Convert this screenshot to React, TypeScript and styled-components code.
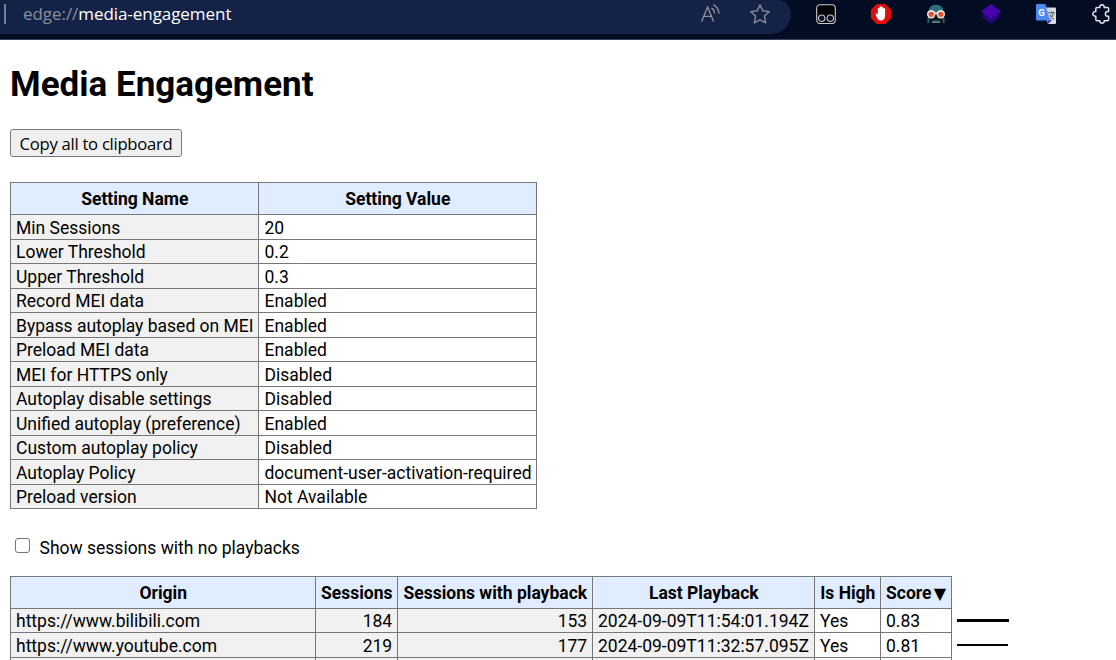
import React from "react";
import styled, { createGlobalStyle } from "styled-components";

const GlobalStyle = createGlobalStyle`
  html, body { margin: 0; padding: 0; background: #fff; }
  body { width: 1116px; height: 660px; overflow: hidden; }
  * { box-sizing: border-box; }
`;

const Window = styled.div`
  height: 660px;
  overflow: hidden;
  font-family: Roboto, "Liberation Sans", sans-serif;
  font-size: 17.5px;
  color: #000;
`;

const Toolbar = styled.header`
  display: flex;
  align-items: flex-start;
  height: 40px;
  background: #020c22;
  border-bottom: 1px solid #3a3f5a;
`;

const AddressBar = styled.div`
  display: flex;
  align-items: flex-start;
  width: 791px;
  height: 34px;
  padding: 4px 21px 0 4px;
  background: #142247;
  border-radius: 0 14px 20px 0 / 0 14px 20px 0;
`;

const Divider = styled.span`
  width: 2px;
  height: 20px;
  background: #757d93;
`;

const Url = styled.span`
  flex: 1;
  padding-left: 17px;
  font-family: "Open Sans", "Noto Sans", sans-serif;
  font-size: 17px;
  line-height: 20px;
  letter-spacing: -0.06px;
  white-space: nowrap;
  color: #fff;
`;

const Scheme = styled.span`
  color: #8a8f9b;
`;

const AddressActions = styled.div`
  display: flex;
  gap: 30px;
`;

const Extensions = styled.div`
  display: flex;
  gap: 35px;
  padding: 4px 0 0 25px;
`;

const Icon = styled.svg`
  display: block;
  flex: none;
  width: 20px;
  height: 20px;
`;

const Page = styled.main`
  padding: 23px 10px 0;
`;

const Title = styled.h1`
  margin: 0;
  font-size: 35px;
  line-height: 44px;
  font-weight: 700;
`;

const CopyButton = styled.button`
  display: block;
  width: 172px;
  height: 28px;
  margin: 22px 0 25px;
  padding: 1px 0 0;
  border: 1px solid #767676;
  border-radius: 3px;
  background: #efefef;
  color: #000;
  font-family: "Open Sans", "Noto Sans", sans-serif;
  font-size: 16.67px;
  line-height: 25px;
  letter-spacing: -0.28px;
  white-space: nowrap;
`;

const Table = styled.div<{ $width: number }>`
  width: ${(p) => p.$width}px;
  border-left: 1px solid #777;
  border-top: 1px solid #777;
`;

const Row = styled.div<{ $columns: string; $height: number }>`
  display: grid;
  grid-template-columns: ${(p) => p.$columns};
  grid-template-rows: ${(p) => p.$height}px;
  line-height: ${(p) => (p.$height === 25 ? 23 : 21)}px;
`;

const HeadCell = styled.div<{ $start?: boolean }>`
  height: 100%;
  padding: 1px 0 0 ${(p) => (p.$start ? 5 : 0.6)}px;
  border-right: 1px solid #777;
  border-bottom: 1px solid #777;
  background: #e0ecff;
  font-weight: 700;
  line-height: 31px;
  text-align: ${(p) => (p.$start ? "left" : "center")};
  white-space: nowrap;
`;

const SortArrow = styled.span`
  margin-left: 2.4px;
  font-family: "DejaVu Sans", sans-serif;
  font-size: 16px;
  line-height: 1;
`;

const Cell = styled.div<{ $shaded?: boolean; $right?: boolean; $inset?: number }>`
  height: 100%;
  padding: 2px 4.8px 0 ${(p) => p.$inset ?? 5}px;
  border-right: 1px solid #777;
  border-bottom: 1px solid #777;
  background: ${(p) => (p.$shaded ? "#f1f1f1" : "#fff")};
  text-align: ${(p) => (p.$right ? "right" : "left")};
  white-space: nowrap;
`;

const Option = styled.label`
  display: flex;
  align-items: center;
  height: 67px;
  padding: 10px 0 0 5px;
`;

const Checkbox = styled.input`
  appearance: none;
  width: 15px;
  height: 15px;
  margin: -4px 9.5px 0 0;
  border: 1px solid #767676;
  border-radius: 3px;
  background: #fff;
`;

const ScoreMeter = styled.div`
  display: flex;
  align-items: center;
  height: 22px;
  padding: 1px 0 0 5px;
`;

const ScoreBar = styled.div<{ $width: number; $height: number }>`
  width: ${(p) => p.$width}px;
  height: ${(p) => p.$height}px;
  background: #000;
`;

const SETTINGS: [string, string][] = [
  ["Min Sessions", "20"],
  ["Lower Threshold", "0.2"],
  ["Upper Threshold", "0.3"],
  ["Record MEI data", "Enabled"],
  ["Bypass autoplay based on MEI", "Enabled"],
  ["Preload MEI data", "Enabled"],
  ["MEI for HTTPS only", "Disabled"],
  ["Autoplay disable settings", "Disabled"],
  ["Unified autoplay (preference)", "Enabled"],
  ["Custom autoplay policy", "Disabled"],
  ["Autoplay Policy", "document-user-activation-required"],
  ["Preload version", "Not Available"],
];

const SESSIONS = [
  { origin: "https://www.bilibili.com", total: "184", played: "153", last: "2024-09-09T11:54:01.194Z", score: "0.83", height: 24, bar: [52, 3] },
  { origin: "https://www.youtube.com", total: "219", played: "177", last: "2024-09-09T11:32:57.095Z", score: "0.81", height: 25, bar: [51, 2] },
];

const SETTING_COLUMNS = "248px 278px";
const SESSION_COLUMNS = "305px 82px 195px 222px 66px 71px 60px";

const ReadAloudIcon = () => (
  <Icon viewBox="0 0 20 20" fill="none" stroke="#8b8d97" strokeWidth="1.4">
    <path d="M1.6 17.6 7.6 3 13.6 17.6M3.8 12.4h7.6" />
    <path d="M11.4 3.8c1.8 1.2 3 2.9 3.2 5.6M13.4.6c3.2 1.8 5.2 4.8 5.8 9" />
  </Icon>
);

const StarIcon = () => (
  <Icon viewBox="0 0 20 20" fill="none" stroke="#8b8d97" strokeWidth="1.4" strokeLinejoin="round">
    <path d="M10 .9 12.8 6.8 19.3 7.6 14.5 12.1 15.7 18.9 10 15.8 4.3 18.9 5.5 12.1.7 7.6 7.2 6.8Z" />
  </Icon>
);

const ScriptIcon = () => (
  <Icon viewBox="0 0 20 20">
    <rect x=".7" y=".7" width="18.6" height="18.8" rx="3.4" fill="#000" stroke="#c9ccd2" strokeWidth="1.1" />
    <circle cx="5.7" cy="14.2" r="3.2" fill="#020c22" stroke="#bfc3cb" strokeWidth="1.2" />
    <circle cx="14.3" cy="14.2" r="3.2" fill="#020c22" stroke="#bfc3cb" strokeWidth="1.2" />
  </Icon>
);

const BlockerIcon = () => (
  <Icon viewBox="0 0 20 20">
    <path d="M5.8 0h8.4L20 5.8v8.4L14.2 20H5.8L0 14.2V5.8Z" fill="#e40d0d" />
    <path
      d="M4.6 10c.5-.9 1.5-.5 2.2.5V5c0-1.3 1.6-1.3 1.7 0V3.4c0-1.4 1.8-1.4 1.8 0v.2c.1-1.2 1.8-1.2 1.8.2v1.1c.2-1.2 2-1.1 2 .3v6.4c0 3-1.6 5-4.3 5-2.5 0-3.8-1.6-5.2-6.6Z"
      fill="#fff"
    />
  </Icon>
);

const SpyIcon = () => (
  <Icon viewBox="0 0 20 20">
    <path d="M2.4 9.5C2.400 3.600 5.200 .8 10 .8s7.600 2.800 7.600 8.700V19H2.400Z" fill="#2e6f7c" />
    <path d="M4.2 9h11.6l1.4 4v6H2.8v-6Z" fill="#11191f" />
    <path d="M1.4 14h1.5v5H1.4ZM17.1 14h1.5v5h-1.5Z" fill="#286878" />
    <path d="M6.2 16.8h7.6V19H6.2Z" fill="#527b86" />
    <path d="M7 8h6v2H7Z" fill="#c8b7ae" />
    <circle cx="5.2" cy="10.3" r="4.2" fill="#f0e3dc" />
    <circle cx="14.8" cy="10.3" r="4.2" fill="#f0e3dc" />
    <circle cx="5.2" cy="10.3" r="2.6" fill="#dc5138" />
    <circle cx="14.8" cy="10.3" r="2.6" fill="#dc5138" />
  </Icon>
);

const LayersIcon = () => (
  <Icon viewBox="0 0 20 20">
    <path d="M10 4.5 20 12 10 20 0 12Z" fill="#240675" />
    <path d="M10 0 20 7.6 10 15.2 0 7.6Z" fill="#4704ad" />
  </Icon>
);

const GlyphText = styled.text`
  font-family: Roboto, sans-serif;
  font-size: 9.5px;
  font-weight: 700;
  fill: #fff;
`;

const TranslateIcon = () => (
  <Icon viewBox="0 0 20 20">
    <path d="M8 3.4h11a1 1 0 0 1 1 1V19a1 1 0 0 1-1 1h-7Z" fill="#d8dadb" />
    <path d="M12 16h4l-4 4Z" fill="#3b35d0" />
    <path d="M12.2 8.7h6.6M15.6 7.2v1.5M17.6 8.7c-.5 2.8-2 5-4 6.6M13.8 10.5c.8 1.8 2.2 3.4 4.2 4.8" fill="none" stroke="#617078" strokeWidth="1.2" />
    <path d="M1 0h8.4L14 16.6H1a1 1 0 0 1-1-1V1a1 1 0 0 1 1-1Z" fill="#4a8af4" />
    <GlyphText x="2.2" y="11.6">G</GlyphText>
  </Icon>
);

const PuzzleIcon = () => (
  <Icon viewBox="0 0 20 20" fill="none" stroke="#dfe1e6" strokeWidth="1.5" strokeLinejoin="round">
    <path d="M6 3.4H8.8c-.2-3.6 4.6-3.6 4.4 0h3.2q1.2 0 1.2 1.2v3h-1c-3 0-3 4.6 0 4.6h1v3.4q0 1.2-1.2 1.2h-3.2c.2 3.2-4.6 3.2-4.4 0H6q-1.2 0-1.2-1.2v-3.4c-4 .2-4-4.8 0-4.6V4.6q0-1.2 1.2-1.2Z" />
  </Icon>
);

export default function App() {
  return (
    <Window>
      <GlobalStyle />
      <Toolbar>
        <AddressBar>
          <Divider />
          <Url>
            <Scheme>edge://</Scheme>media-engagement
          </Url>
          <AddressActions>
            <ReadAloudIcon />
            <StarIcon />
          </AddressActions>
        </AddressBar>
        <Extensions>
          <ScriptIcon />
          <BlockerIcon />
          <SpyIcon />
          <LayersIcon />
          <TranslateIcon />
          <PuzzleIcon />
        </Extensions>
      </Toolbar>
      <Page>
        <Title>Media Engagement</Title>
        <CopyButton>Copy all to clipboard</CopyButton>
        <Table $width={527}>
          <Row $columns={SETTING_COLUMNS} $height={32}>
            <HeadCell>Setting Name</HeadCell>
            <HeadCell>Setting Value</HeadCell>
          </Row>
          {SETTINGS.map(([name, value], i) => (
            <Row key={name} $columns={SETTING_COLUMNS} $height={i % 2 ? 24 : 25}>
              <Cell $shaded>{name}</Cell>
              <Cell $inset={5.5}>{value}</Cell>
            </Row>
          ))}
        </Table>
        <Option>
          <Checkbox type="checkbox" />
          Show sessions with no playbacks
        </Option>
        <Table $width={942}>
          <Row $columns={SESSION_COLUMNS} $height={32}>
            <HeadCell>Origin</HeadCell>
            <HeadCell>Sessions</HeadCell>
            <HeadCell>Sessions with playback</HeadCell>
            <HeadCell>Last Playback</HeadCell>
            <HeadCell>Is High</HeadCell>
            <HeadCell $start>
              Score<SortArrow>▼</SortArrow>
            </HeadCell>
          </Row>
          {SESSIONS.map((s) => (
            <Row key={s.origin} $columns={SESSION_COLUMNS} $height={s.height}>
              <Cell $shaded>{s.origin}</Cell>
              <Cell $shaded $right>{s.total}</Cell>
              <Cell $shaded $right>{s.played}</Cell>
              <Cell $shaded>{s.last}</Cell>
              <Cell>Yes</Cell>
              <Cell>{s.score}</Cell>
              <ScoreMeter>
                <ScoreBar $width={s.bar[0]} $height={s.bar[1]} />
              </ScoreMeter>
            </Row>
          ))}
          <Row $columns={SESSION_COLUMNS} $height={24}>
            <Cell $shaded />
            <Cell $shaded />
            <Cell $shaded />
            <Cell $shaded />
            <Cell />
            <Cell />
          </Row>
        </Table>
      </Page>
    </Window>
  );
}
